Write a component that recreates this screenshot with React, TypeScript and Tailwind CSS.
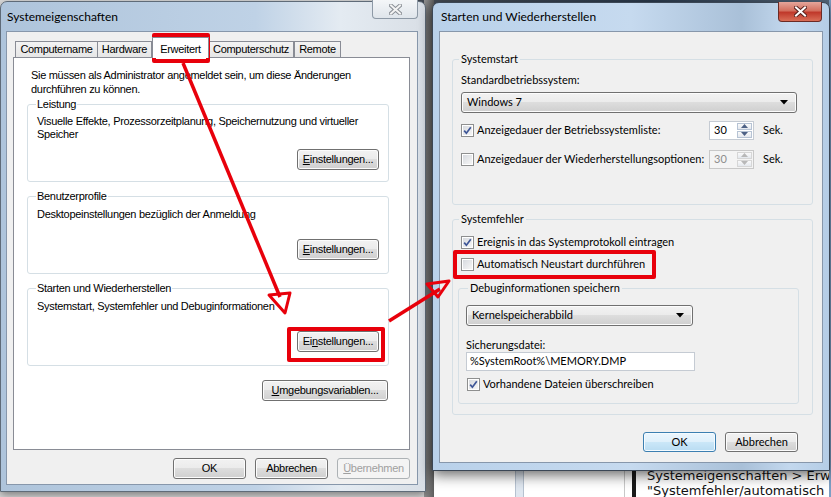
import type { ReactNode } from "react"

function XGlyph({ fill, edge }: { fill: string; edge: string }) {
  return (
    <svg width="13" height="11" viewBox="0 0 13 11">
      <path d="M2 1.5 L11 9.5 M11 1.5 L2 9.5" stroke={edge} strokeWidth="4" strokeLinecap="square" />
      <path d="M2 1.5 L11 9.5 M11 1.5 L2 9.5" stroke={fill} strokeWidth="2" strokeLinecap="square" />
    </svg>
  )
}

function Btn({ children, className = "", disabled = false, def = false }: { children: ReactNode; className?: string; disabled?: boolean; def?: boolean }) {
  const look = disabled
    ? "border-[#adb2b5] bg-[#f4f4f4] text-[#a0a0a0]"
    : def
      ? "border-[#3c7fb1] bg-[linear-gradient(#ecf6fd_0%,#dff0fb_49%,#cbe7f8_50%,#b9dcf2_100%)] shadow-[inset_0_0_0_1px_#f4fbff] text-black"
      : "border-[#707070] bg-[linear-gradient(#f2f2f2_0%,#ebebeb_49%,#dddddd_50%,#cfcfcf_100%)] shadow-[inset_0_0_0_1px_#fcfcfc] text-black"
  return <div className={`flex shrink-0 items-center justify-center rounded-[3px] border ${look} ${className}`}>{children}</div>
}

function Check({ checked = false }: { checked?: boolean }) {
  return (
    <span className="flex h-[13px] w-[13px] shrink-0 items-center justify-center border border-[#8e8f8f] bg-white p-[1px]">
      <span className="flex h-full w-full items-center justify-center bg-[linear-gradient(135deg,#d7dadf,#f6f6f6)]">
        {checked && (
          <svg width="9" height="9" viewBox="0 0 9 9">
            <path d="M1.2 4.6 L3.4 7.2 L7.8 1.2" stroke="#3e5697" strokeWidth="1.7" fill="none" />
          </svg>
        )}
      </span>
    </span>
  )
}

function Combo({ text, className = "" }: { text: string; className?: string }) {
  return (
    <div className={`flex h-[21px] items-center justify-between rounded-[3px] border border-[#707070] bg-[linear-gradient(#f2f2f2_0%,#ebebeb_49%,#dddddd_50%,#cfcfcf_100%)] pl-[5px] pr-[8px] shadow-[inset_0_0_0_1px_#fcfcfc] ${className}`}>
      <span>{text}</span>
      <svg width="8" height="5" viewBox="0 0 8 5">
        <path d="M0 0 H8 L4 4.5 Z" fill="#000" />
      </svg>
    </div>
  )
}

function Spin({ disabled = false }: { disabled?: boolean }) {
  const arrow = disabled ? "#b8b8b8" : "#4d6185"
  return (
    <div className={`flex h-[19px] w-[45px] border ${disabled ? "border-[#c8c8c8] bg-[#f4f4f4] text-[#8d8d8d]" : "border-[#c5cbd3] bg-white text-black"}`}>
      <span className="flex flex-1 items-center pl-[4px]">30</span>
      <div className="flex w-[17px] flex-col gap-[1px] p-[1px]">
        {[0, 1].map((i) => (
          <div key={i} className={`flex flex-1 items-center justify-center border ${disabled ? "border-[#d6d6d6]" : "border-[#b6c3d4]"} bg-[linear-gradient(#fafafa,#e4e8ee)]`}>
            <svg width="7" height="4" viewBox="0 0 7 4">
              <path d={i === 0 ? "M0 4 H7 L3.5 0 Z" : "M0 0 H7 L3.5 4 Z"} fill={arrow} />
            </svg>
          </div>
        ))}
      </div>
    </div>
  )
}

function Group({ title, text, btn, btnTop, className = "" }: { title: string; text: ReactNode; btn: ReactNode; btnTop: string; className?: string }) {
  return (
    <fieldset className={`h-[84px] rounded-[3px] border border-[#d5dfe5] px-[9px] ${className}`}>
      <legend className="ml-[-1px] px-[1px] leading-[13px]">{title}</legend>
      <p className="mt-[4px] leading-[13px] whitespace-nowrap">{text}</p>
      <div className="flex justify-end">
        <Btn className={`${btnTop} h-[21px] w-[82px]`}>{btn}</Btn>
      </div>
    </fieldset>
  )
}

function SystemProperties() {
  const tabs = [
    { label: "Computername", w: "w-[82px]" },
    { label: "Hardware", w: "w-[55px]" },
    { label: "Erweitert", w: "w-[57px]", active: true },
    { label: "Computerschutz", w: "w-[85px]" },
    { label: "Remote", w: "w-[47px]" },
  ]
  return (
    <div className="absolute left-0 top-[1px] flex h-[491px] w-[426px] flex-col rounded-t-[7px] border border-[#5f6b78] bg-[linear-gradient(90deg,#aec4db_0%,#bfd2e6_60%,#e4ebf2_80%,#d9dfe6_100%)] pb-[6px] pl-[5px] pr-[7px] shadow-[0_3px_10px_rgba(0,0,0,0.45)]">
      <div className="flex h-[29px] shrink-0 items-start justify-between">
        <span className="mt-[7px] ml-[1px] font-['Lato',sans-serif] text-[12px] leading-[16px] text-black">Systemeigenschaften</span>
        <div className="mt-[-2px] flex h-[19px] w-[46px] items-center justify-center rounded-b-[4px] border border-t-0 border-[#8d99a6] bg-[linear-gradient(#f4f6f8,#dfe5eb)]">
          <XGlyph fill="#f3f3f3" edge="#8a8f96" />
        </div>
      </div>
      <div className="flex flex-1 flex-col border border-[#8797ab] bg-[#f0f0f0] pl-[6px] pr-[7px] font-['Liberation_Sans',Arial,sans-serif] text-[11px] tracking-[-0.3px] text-black">
        <div className="flex h-[25px] items-end pl-[2px]">
          {tabs.map((t) =>
            t.active ? (
              <div key={t.label} className={`${t.w} z-10 -mb-px flex h-[21px] items-start justify-center border border-b-0 border-[#898c95] bg-white pt-[3px]`}>
                {t.label}
              </div>
            ) : (
              <div key={t.label} className={`${t.w} flex h-[16px] items-center justify-center border border-b-0 border-[#898c95] bg-[linear-gradient(#f3f3f3,#e6e6e6)] first:border-r-0 [&:nth-child(4)]:border-l-0`}>
                {t.label}
              </div>
            ),
          )}
        </div>
        <div className="flex h-[393px] flex-col border border-[#898c95] bg-white pl-[13px] pr-[20px] pt-[10px]">
          <p className="pl-[4px] leading-[14px]">
            Sie müssen als Administrator angemeldet sein, um diese Änderungen
            <br />
            durchführen zu können.
          </p>
          <Group
            className="mt-[2px]"
            title="Leistung"
            text={<>Visuelle Effekte, Prozessorzeitplanung, Speichernutzung und virtueller<br />Speicher</>}
            btnTop="mt-[8px]"
            btn={<><span className="underline">E</span>instellungen...</>}
          />
          <Group
            className="mt-[8px]"
            title="Benutzerprofile"
            text={<span className="mt-[5px] block">Desktopeinstellungen bezüglich der Anmeldung</span>}
            btnTop="mt-[18px]"
            btn={<><span className="underline">E</span>instellungen...</>}
          />
          <Group
            className="mt-[8px]"
            title="Starten und Wiederherstellen"
            text={<span className="mt-[5px] block">Systemstart, Systemfehler und Debuginformationen</span>}
            btnTop="mt-[18px]"
            btn={<>Ei<span className="underline">n</span>stellungen...</>}
          />
          <Btn className="mt-[14px] mr-[1px] h-[21px] w-[126px] self-end">
            <span className="underline">U</span>mgebungsvariablen...
          </Btn>
        </div>
        <div className="mt-[8px] flex justify-end gap-[9px]">
          <Btn className="h-[21px] w-[73px]">OK</Btn>
          <Btn className="h-[21px] w-[73px]">Abbrechen</Btn>
          <Btn className="h-[21px] w-[73px]" disabled>
            <span className="underline">Ü</span>bernehmen
          </Btn>
        </div>
      </div>
    </div>
  )
}

function StartupRecovery() {
  return (
    <div className="absolute left-[432px] top-[2px] flex h-[469px] w-[398px] flex-col rounded-t-[7px] border border-[#3b4756] bg-[linear-gradient(90deg,#b9d1ea_0%,#c6daef_50%,#a9c0d8_78%,#c3d8ee_90%,#b5cde6_100%)] pb-[7px] pl-[6px] pr-[6px] shadow-[0_4px_14px_rgba(0,0,0,0.6)]">
      <div className="flex h-[28px] shrink-0 items-start justify-between">
        <span className="mt-[6px] ml-[2px] font-['Lato',sans-serif] text-[12px] leading-[16px] text-black">Starten und Wiederherstellen</span>
        <div className="mt-[-1px] mr-[1px] flex h-[20px] w-[44px] items-center justify-center rounded-b-[4px] border border-t-0 border-[#6b2a24] bg-[linear-gradient(#e4a69b_0%,#d3705f_45%,#c0392b_55%,#d96e57_100%)]">
          <XGlyph fill="#ffffff" edge="#5a2420" />
        </div>
      </div>
      <div className="flex flex-1 flex-col border border-[#8797ab] bg-[#f0f0f0] pl-[12px] pr-[9px] pt-[19px] font-['Lato',sans-serif] text-[11px] text-black">
        <fieldset className="flex h-[154px] flex-col rounded-[3px] border border-[#d5dfe5] pl-[8px]">
          <legend className="ml-[-2px] px-[2px] leading-[16px]">Systemstart</legend>
          <span className="mt-[5px] leading-[16px]">Standardbetriebssystem:</span>
          <Combo text="Windows 7" className="mt-[4px] w-[336px]" />
          <div className="mt-[7px] grid h-[20px] grid-cols-[248px_45px_auto] items-center">
            <span className="flex items-center gap-[3px] whitespace-nowrap">
              <Check checked />
              Anzeigedauer der Betriebssystemliste:
            </span>
            <Spin />
            <span className="ml-[9px]">Sek.</span>
          </div>
          <div className="mt-[9px] grid h-[20px] grid-cols-[248px_45px_auto] items-center">
            <span className="flex items-center gap-[3px] whitespace-nowrap">
              <Check />
              Anzeigedauer der Wiederherstellungsoptionen:
            </span>
            <Spin disabled />
            <span className="ml-[9px]">Sek.</span>
          </div>
        </fieldset>
        <fieldset className="mt-[6px] flex h-[204px] flex-col rounded-[3px] border border-[#d5dfe5] pl-[5px] pr-[13px]">
          <legend className="ml-[1px] px-[2px] leading-[16px]">Systemfehler</legend>
          <span className="mt-[7px] flex h-[16px] items-center gap-[3px] pl-[3px]">
            <Check checked />
            Ereignis in das Systemprotokoll eintragen
          </span>
          <span className="mt-[6px] flex h-[16px] items-center gap-[3px] pl-[3px]">
            <Check />
            Automatisch Neustart durchführen
          </span>
          <fieldset className="mt-[8px] flex h-[124px] flex-col rounded-[3px] border border-[#d5dfe5] pl-[7px]">
            <legend className="ml-[2px] px-[2px] leading-[16px]">Debuginformationen speichern</legend>
            <Combo text="Kernelspeicherabbild" className="mt-[9px] w-[227px]" />
            <span className="mt-[12px] leading-[14px]">Sicherungsdatei:</span>
            <div className="flex h-[19px] w-[229px] items-center border border-[#c5cbd3] bg-white pl-[3px]">%SystemRoot%\MEMORY.DMP</div>
            <span className="mt-[5px] flex h-[16px] items-center gap-[3px] pl-[1px]">
              <Check checked />
              Vorhandene Dateien überschreiben
            </span>
          </fieldset>
        </fieldset>
        <div className="mt-[17px] mr-[15px] flex justify-end gap-[9px]">
          <Btn def className="h-[20px] w-[73px]">OK</Btn>
          <Btn className="h-[20px] w-[73px]">Abbrechen</Btn>
        </div>
      </div>
    </div>
  )
}

export default function App() {
  return (
    <div className="relative h-[497px] w-[831px] overflow-hidden bg-[#dcdcdc]">
      {/* desktop behind the dialogs */}
      <div className="absolute left-[380px] top-0 h-[12px] w-[451px] bg-[linear-gradient(90deg,#4a4f57,#2c3b4d_60%,#56687c)]" />
      <div className="absolute left-[424px] top-0 h-[497px] w-[10px] bg-[linear-gradient(90deg,#9a9a9a,#5d5d5d)]" />
      <div className="absolute left-[434px] top-[462px] flex h-[35px] w-[397px] overflow-hidden bg-white">
        <div className="ml-[81px] w-[9px] shrink-0 border-x border-[#b6c2d0] bg-[#dfe7f0]" />
        <div className="ml-[100px] w-px shrink-0 bg-[#c8c8c8]" />
        <div className="ml-[7px] w-[4px] shrink-0 bg-[#1a1a1a]" />
        <div className="ml-[11px] shrink-0 pt-[6px] font-['DejaVu_Sans',sans-serif] text-[13px] leading-[15px] whitespace-nowrap text-[#111]">
          Systemeigenschaften &gt; Erweitert
          <br />
          "Systemfehler/automatisch
        </div>
      </div>
      <div className="absolute right-0 top-0 h-[497px] w-[2px] bg-[#7d9fc4]" />

      <SystemProperties />
      <StartupRecovery />

      {/* red annotations */}
      <svg className="pointer-events-none absolute inset-0" width="831" height="497" viewBox="0 0 831 497">
        <g stroke="#e8000b" fill="none" strokeLinejoin="round">
          <rect x="154" y="35" width="54" height="26" strokeWidth="4" />
          <rect x="289" y="329" width="94" height="31" strokeWidth="4" />
          <rect x="455" y="252" width="199" height="25" strokeWidth="4" />
          <path d="M183 63 L280 297" strokeWidth="3.5" />
          <path d="M269 295 L290 293 L285 313 Z" strokeWidth="3" />
          <path d="M389 321 L440 289" strokeWidth="3.5" />
          <path d="M427 284 L449 281 L438 297 Z" strokeWidth="3" />
        </g>
      </svg>
    </div>
  )
}
